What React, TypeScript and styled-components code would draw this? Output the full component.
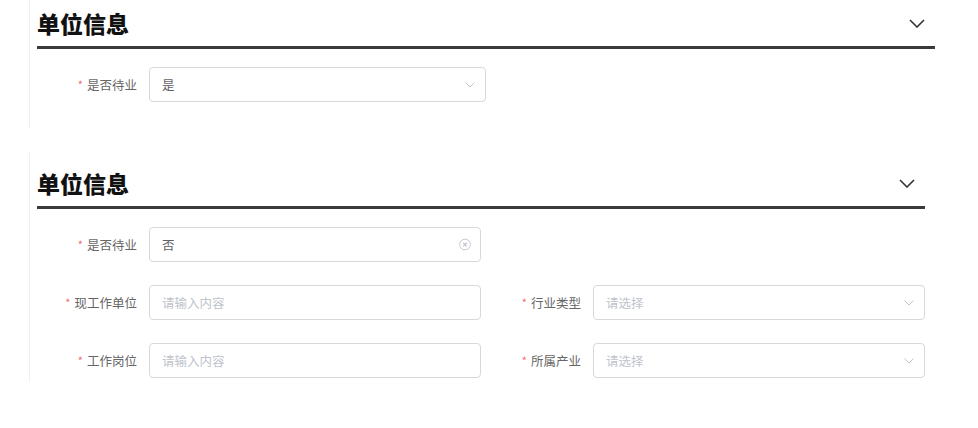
import styled, { createGlobalStyle } from "styled-components";

const GlobalStyle = createGlobalStyle`
  body {
    margin: 0;
    background: #fff;
    font-family: "Noto Sans CJK SC", "Noto Sans", sans-serif;
  }
`;

const Page = styled.div`
  padding-left: 29px;
`;

const Panel = styled.section<{ $width: number; $top: number; $bottom: number }>`
  width: ${({ $width }) => $width}px;
  margin-top: ${({ $top }) => $top}px;
  padding: 0 0 ${({ $bottom }) => $bottom}px 7px;
  border-left: 1px solid #efefef;
`;

const Header = styled.header<{ $offset: number }>`
  display: flex;
  align-items: center;
  justify-content: space-between;
  height: 46px;
  padding-top: ${({ $offset }) => $offset}px;
  border-bottom: 3px solid #3a3a3a;
`;

const Title = styled.h2`
  margin: 0;
  font-size: 23px;
  font-weight: 900;
  color: #111;
`;

const Toggle = styled.span`
  display: flex;
  margin-right: 10px;
`;

const FormGrid = styled.div`
  display: grid;
  grid-template-columns: 1fr 1fr;
  row-gap: 23px;
  margin-top: 18px;
`;

const Field = styled.div`
  display: flex;
  align-items: center;
`;

const Label = styled.label`
  box-sizing: border-box;
  width: 112px;
  padding-right: 12px;
  text-align: right;
  font-size: 12.5px;
  color: #666;
  white-space: nowrap;
`;

const Star = styled.span`
  color: #f56c6c;
  font-size: 11px;
  margin-right: 4px;
  vertical-align: 1px;
`;

const InputBox = styled.div<{ $empty: boolean }>`
  flex: 1;
  box-sizing: border-box;
  height: 35px;
  display: flex;
  align-items: center;
  justify-content: space-between;
  padding: 0 9px 0 12px;
  border: 1px solid #d6d8dc;
  border-radius: 4px;
  font-size: 12.5px;
  color: ${({ $empty }) => ($empty ? "#c0c4cc" : "#606266")};
`;

const Suffix = styled.span`
  display: flex;
  width: 12px;
  justify-content: center;
`;

const Chevron = () => (
  <svg width="16" height="9" viewBox="0 0 16 9">
    <path d="M1 1l7 7 7-7" stroke="#333" strokeWidth="1.6" fill="none" />
  </svg>
);

const ArrowDown = () => (
  <svg width="10" height="6" viewBox="0 0 10 6">
    <path d="M0.5 0.5l4.5 4.5 4.5-4.5" stroke="#c0c4cc" strokeWidth="1" fill="none" />
  </svg>
);

const ClearIcon = () => (
  <svg width="13" height="13" viewBox="0 0 13 13">
    <circle cx="6.5" cy="6.5" r="5.8" stroke="#c0c4cc" strokeWidth="1" fill="none" />
    <path d="M4.6 4.6l3.8 3.8M8.4 4.6l-3.8 3.8" stroke="#c0c4cc" strokeWidth="1.2" />
  </svg>
);

type FieldProps = {
  label: string;
  value?: string;
  placeholder?: string;
  suffix?: "arrow" | "clear";
};

const FormField = ({ label, value, placeholder, suffix }: FieldProps) => (
  <Field>
    <Label>
      <Star>*</Star>
      {label}
    </Label>
    <InputBox $empty={!value}>
      <span>{value || placeholder}</span>
      {suffix && <Suffix>{suffix === "arrow" ? <ArrowDown /> : <ClearIcon />}</Suffix>}
    </InputBox>
  </Field>
);

export default function App() {
  return (
    <Page>
      <GlobalStyle />
      <Panel $width={898} $top={0} $bottom={26}>
        <Header $offset={0}>
          <Title>单位信息</Title>
          <Toggle>
            <Chevron />
          </Toggle>
        </Header>
        <FormGrid>
          <FormField label="是否待业" value="是" suffix="arrow" />
        </FormGrid>
      </Panel>

      <Panel $width={888} $top={25} $bottom={4}>
        <Header $offset={7}>
          <Title>单位信息</Title>
          <Toggle>
            <Chevron />
          </Toggle>
        </Header>
        <FormGrid>
          <FormField label="是否待业" value="否" suffix="clear" />
          <div />
          <FormField label="现工作单位" placeholder="请输入内容" />
          <FormField label="行业类型" placeholder="请选择" suffix="arrow" />
          <FormField label="工作岗位" placeholder="请输入内容" />
          <FormField label="所属产业" placeholder="请选择" suffix="arrow" />
        </FormGrid>
      </Panel>
    </Page>
  );
}
